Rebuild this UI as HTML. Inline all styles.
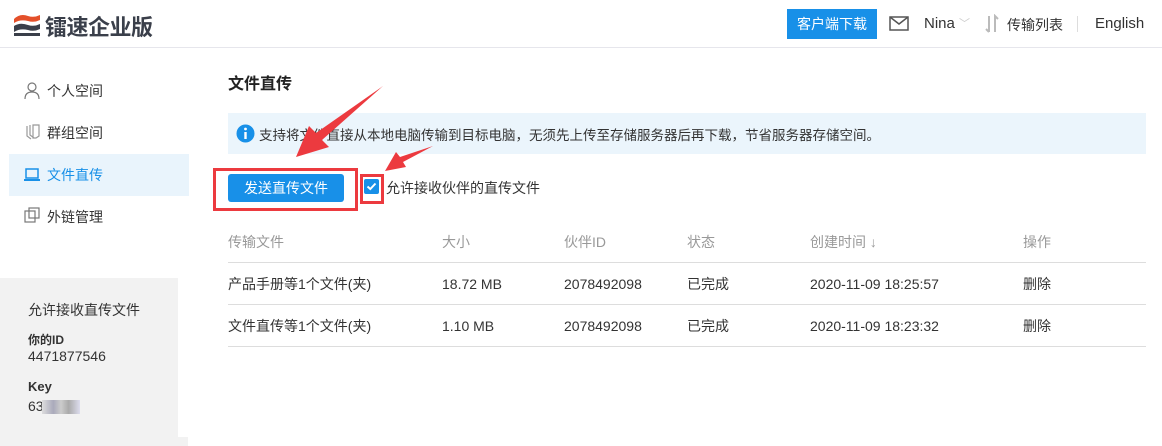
<!DOCTYPE html>
<html><head><meta charset="utf-8"><style>
*{margin:0;padding:0;box-sizing:border-box}
body{width:1162px;height:446px;overflow:hidden;background:#fff;font-family:"Liberation Sans","Noto Sans CJK SC",sans-serif;color:#333;font-size:14px;position:relative}
.abs{position:absolute}
.hdr{left:0;top:0;width:1162px;height:48px;border-bottom:1px solid #e6e6ec}
.nav div{position:absolute;left:0;width:188px;height:42px;line-height:42px;padding-left:47px;font-size:14px;color:#333}
.row{position:absolute;left:228px;width:918px;height:42px;border-bottom:1px solid #ddd;font-size:14px}
.row span{position:absolute;top:0;line-height:42px}
</style></head><body>
<div class="abs hdr">
  <svg class="abs" style="left:12px;top:13px" width="30" height="24" viewBox="0 0 30 24">
    <path d="M2 6 Q8 0 16 3 Q22 5 28 2 L28 7 Q22 10 16 8 Q8 6 2 10Z" fill="#e4502a"/>
    <path d="M2 13 Q8 9 16 12 Q22 14 28 11 L28 16 Q22 19 16 17 Q8 15 2 19Z" fill="#3a3f4a"/>
    <rect x="2" y="20" width="26" height="3" fill="#3a3f4a"/>
  </svg>
  <div class="abs" style="left:45px;top:10px;font-size:22px;font-weight:bold;color:#3a3f4a;letter-spacing:-0.5px">镭速企业版</div>
  <div class="abs" style="left:787px;top:9px;width:90px;height:30px;background:#1890e8;color:#fff;font-size:14px;line-height:30px;text-align:center">客户端下载</div>
  <svg class="abs" style="left:889px;top:16px" width="20" height="15" viewBox="0 0 20 15"><rect x="1" y="1" width="18" height="13" fill="none" stroke="#555" stroke-width="1.5"/><path d="M1 1 L10 8 L19 1" fill="none" stroke="#555" stroke-width="1.5"/></svg>
  <div class="abs" style="left:924px;top:15px;font-size:15px;color:#333">Nina</div>
  <div class="abs" style="left:959px;top:15px;font-size:11px;color:#ccc">﹀</div>
  <svg class="abs" style="left:984px;top:14px" width="16" height="20" viewBox="0 0 16 20"><path d="M5 2 V18 M2 15 L5 18" fill="none" stroke="#bbb" stroke-width="2"/><path d="M11 18 V2 L14 5" fill="none" stroke="#bbb" stroke-width="2"/></svg>
  <div class="abs" style="left:1007px;top:15px;font-size:14px;color:#333">传输列表</div>
  <div class="abs" style="left:1077px;top:16px;width:1px;height:16px;background:#ddd"></div>
  <div class="abs" style="left:1095px;top:15px;font-size:15px;color:#333">English</div>
</div>

<div class="nav">
  <div style="top:70px">个人空间</div>
  <div style="top:112px">群组空间</div>
  <div style="top:154px;left:9px;width:180px;padding-left:38px;background:#e9f4fc;color:#1890e8">文件直传</div>
  <div style="top:196px">外链管理</div>
</div>
<svg class="abs" style="left:24px;top:82px" width="16" height="18" viewBox="0 0 16 18"><circle cx="8" cy="5" r="4" fill="none" stroke="#777" stroke-width="1.2"/><path d="M1 17 Q1 10 8 10 Q15 10 15 17" fill="none" stroke="#777" stroke-width="1.2"/></svg>
<svg class="abs" style="left:25px;top:124px" width="16" height="16" viewBox="0 0 16 16"><path d="M2 2 V12 L6 15 M5 1 V11 L9 14 M8 1 H14 V12 L11 14 H8 Z" fill="none" stroke="#999" stroke-width="1.2"/></svg>
<svg class="abs" style="left:24px;top:168px" width="16" height="14" viewBox="0 0 16 14"><rect x="2" y="1" width="12" height="9" fill="none" stroke="#1890e8" stroke-width="1.5"/><rect x="0" y="11" width="16" height="2" fill="#1890e8"/></svg>
<svg class="abs" style="left:24px;top:207px" width="16" height="16" viewBox="0 0 16 16"><rect x="1" y="4" width="10" height="11" fill="none" stroke="#777" stroke-width="1.2"/><rect x="5" y="1" width="10" height="10" fill="none" stroke="#777" stroke-width="1.2"/></svg>

<div class="abs" style="left:0;top:278px;width:178px;height:159px;background:#f2f2f2"></div>
<div class="abs" style="left:0;top:437px;width:188px;height:9px;background:#f2f2f2"></div>
<div class="abs" style="left:28px;top:300px;font-size:14px;color:#333">允许接收直传文件</div>
<div class="abs" style="left:28px;top:331px;font-size:12px;font-weight:bold;color:#333">你的ID</div>
<div class="abs" style="left:28px;top:348px;font-size:14px;color:#333">4471877546</div>
<div class="abs" style="left:28px;top:379px;font-size:13px;font-weight:bold;color:#333">Key</div>
<div class="abs" style="left:28px;top:398px;font-size:14px;color:#333">63</div>
<div class="abs" style="left:42px;top:400px;width:38px;height:14px;background:linear-gradient(90deg,#ddd,#aab 30%,#ccc 50%,#aaa 70%,#dde)"></div>

<div class="abs" style="left:228px;top:70px;font-size:16px;font-weight:bold;color:#222">文件直传</div>
<div class="abs" style="left:228px;top:113px;width:918px;height:41px;background:#ebf5fc"></div>
<svg class="abs" style="left:236px;top:124px" width="19" height="19" viewBox="0 0 19 19"><circle cx="9.5" cy="9.5" r="9" fill="#1890e8"/><rect x="8.3" y="8" width="2.4" height="7" fill="#fff"/><circle cx="9.5" cy="5" r="1.4" fill="#fff"/></svg>
<div class="abs" style="left:259px;top:124px;font-size:13.5px;color:#333;white-space:nowrap">支持将文件直接从本地电脑传输到目标电脑，无须先上传至存储服务器后再下载，节省服务器存储空间。</div>

<div class="abs" style="left:228px;top:174px;width:116px;height:28px;background:#1890e8;border-radius:3px;color:#fff;font-size:14px;line-height:28px;text-align:center">发送直传文件</div>
<div class="abs" style="left:213px;top:168px;width:145px;height:43px;border:3px solid #ec3a3f"></div>
<div class="abs" style="left:364px;top:179px;width:15px;height:15px;background:#1890e8;border-radius:2px"></div>
<svg class="abs" style="left:364px;top:179px" width="15" height="15" viewBox="0 0 15 15"><path d="M3.5 7.5 L6.3 10 L11.5 4.5" fill="none" stroke="#fff" stroke-width="2"/></svg>
<div class="abs" style="left:360px;top:174px;width:24px;height:30px;border:3px solid #ec3a3f"></div>
<div class="abs" style="left:386px;top:178px;font-size:14px;color:#333">允许接收伙伴的直传文件</div>

<svg class="abs" style="left:0;top:0" width="1162" height="446">
  <polygon points="383,86 322,140 329,147 296,157 309,126 316,133" fill="#ec3a3f"/>
  <polygon points="433,146 403,162 406,167 385,171 396,152 400,157" fill="#ec3a3f"/>
</svg>

<div class="row" style="top:221px;color:#999">
  <span style="left:0">传输文件</span><span style="left:214px">大小</span><span style="left:336px">伙伴ID</span><span style="left:459px">状态</span><span style="left:582px">创建时间 ↓</span><span style="left:795px">操作</span>
</div>
<div class="row" style="top:263px">
  <span style="left:0">产品手册等1个文件(夹)</span><span style="left:214px">18.72 MB</span><span style="left:336px">2078492098</span><span style="left:459px">已完成</span><span style="left:582px">2020-11-09 18:25:57</span><span style="left:795px">删除</span>
</div>
<div class="row" style="top:305px">
  <span style="left:0">文件直传等1个文件(夹)</span><span style="left:214px">1.10 MB</span><span style="left:336px">2078492098</span><span style="left:459px">已完成</span><span style="left:582px">2020-11-09 18:23:32</span><span style="left:795px">删除</span>
</div>
</body></html>
